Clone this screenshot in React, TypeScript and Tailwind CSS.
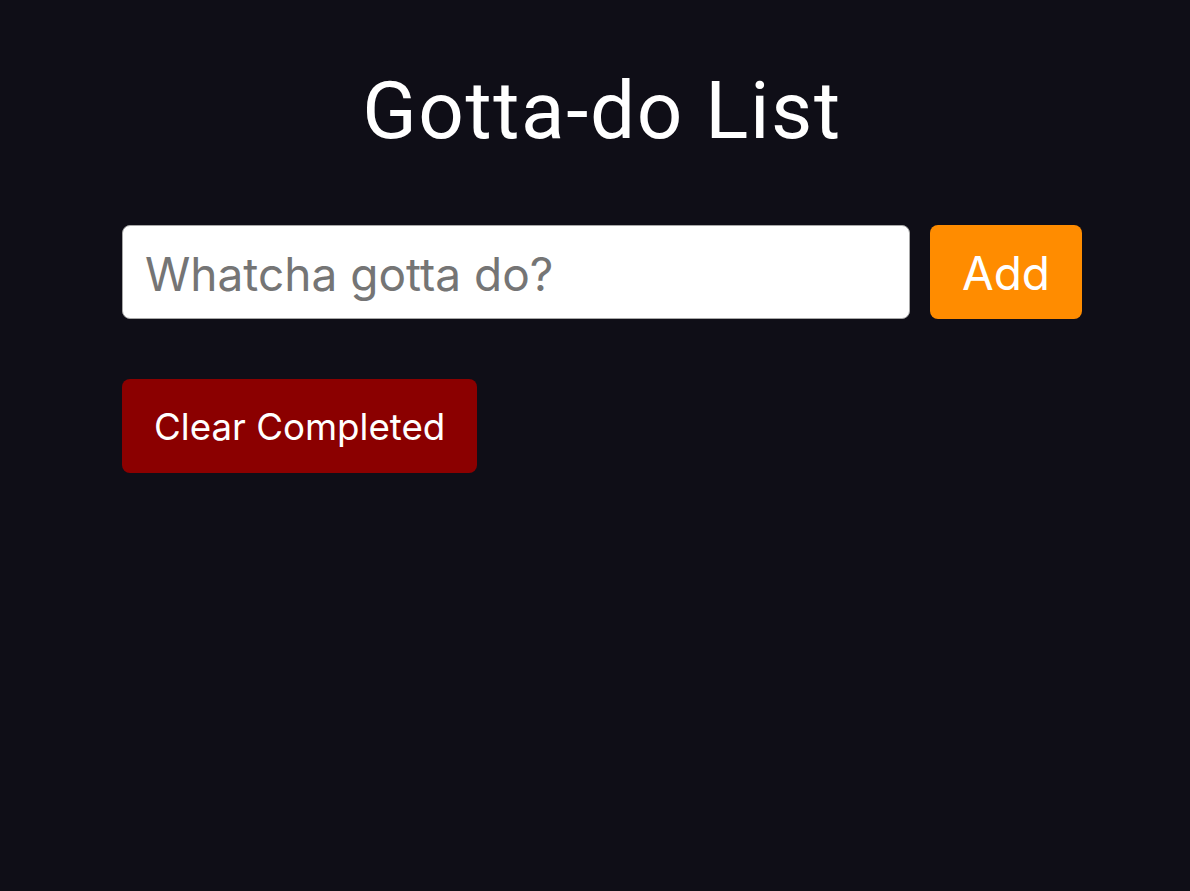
export default function App() {
  return (
    <div className="min-h-[891px] w-full bg-[#0f0e17] text-white">
      <div className="ml-[122px] w-[960px] pt-[63px]">
        <h1
          className="text-center text-[80px] leading-[1.2] tracking-[1.6px] text-white"
          style={{ fontFamily: 'Roboto, sans-serif' }}
        >
          Gotta-do List
        </h1>
        <div className="mt-[66px] flex gap-[20px]" style={{ fontFamily: 'Inter, "Noto Sans", sans-serif' }}>
          <input
            type="text"
            placeholder="Whatcha gotta do?"
            className="h-[94px] min-w-0 flex-1 rounded-[8px] border border-[#a8a8a8] bg-white px-[22px] pt-[3px] text-[46px] text-black outline-none placeholder:text-[#757575]"
          />
          <button className="h-[94px] w-[152px] rounded-[8px] bg-[#ff8c00] pt-[2px] text-[46px] text-white">Add</button>
        </div>
        <div className="mt-[60px]" style={{ fontFamily: 'Inter, "Noto Sans", sans-serif' }}>
          <button className="h-[94px] rounded-[8px] bg-[#8b0000] px-[32px] pt-[2px] text-[36.7px] text-white">
            Clear Completed
          </button>
        </div>
      </div>
    </div>
  );
}
